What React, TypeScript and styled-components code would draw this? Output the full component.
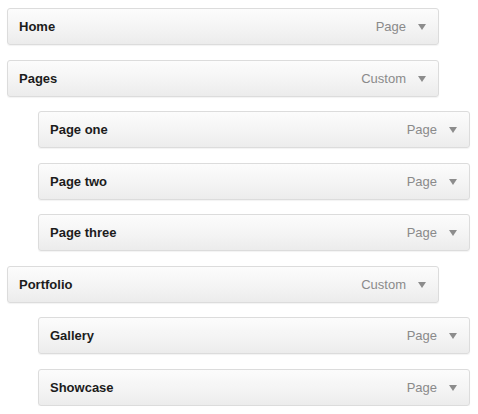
import React from "react";
import styled, { createGlobalStyle } from "styled-components";

type MenuItem = {
  label: string;
  kind: string;
  depth: number;
};

const items: MenuItem[] = [
  { label: "Home", kind: "Page", depth: 0 },
  { label: "Pages", kind: "Custom", depth: 0 },
  { label: "Page one", kind: "Page", depth: 1 },
  { label: "Page two", kind: "Page", depth: 1 },
  { label: "Page three", kind: "Page", depth: 1 },
  { label: "Portfolio", kind: "Custom", depth: 0 },
  { label: "Gallery", kind: "Page", depth: 1 },
  { label: "Showcase", kind: "Page", depth: 1 },
];

const GlobalStyle = createGlobalStyle`
  html, body {
    margin: 0;
    padding: 0;
    background: #ffffff;
  }
  body {
    font-family: "Liberation Sans", Arial, Helvetica, sans-serif;
  }
`;

const MenuList = styled.ul`
  list-style: none;
  margin: 0;
  padding: 8px 0 0 7px;
  display: flex;
  flex-direction: column;
  gap: 14.5px;
`;

const MenuRow = styled.li<{ $depth: number }>`
  box-sizing: border-box;
  width: 432px;
  height: 37px;
  margin-left: ${(p) => p.$depth * 31}px;
  display: flex;
  align-items: center;
  padding: 0 12px 0 11px;
  border: 1px solid #dcdcdc;
  border-radius: 3px;
  background: linear-gradient(to bottom, #fcfcfc 0%, #f4f4f4 55%, #ececec 100%);
  box-shadow: 0 1px 1px rgba(0, 0, 0, 0.05);
`;

const Title = styled.span`
  flex: 1;
  font-size: 13px;
  font-weight: bold;
  color: #1c1c1c;
`;

const Kind = styled.span`
  font-size: 13px;
  color: #8a8a8a;
  margin-right: 12px;
`;

const Arrow = styled.span`
  width: 0;
  height: 0;
  border-left: 4px solid transparent;
  border-right: 4px solid transparent;
  border-top: 6px solid #8c8c8c;
  margin-top: 1px;
`;

const App = () => {
  return (
    <>
      <GlobalStyle />
      <MenuList>
        {items.map((item, index) => (
          <MenuRow key={`menu_item_${index}`} $depth={item.depth}>
            <Title>{item.label}</Title>
            <Kind>{item.kind}</Kind>
            <Arrow />
          </MenuRow>
        ))}
      </MenuList>
    </>
  );
};

export default App;
